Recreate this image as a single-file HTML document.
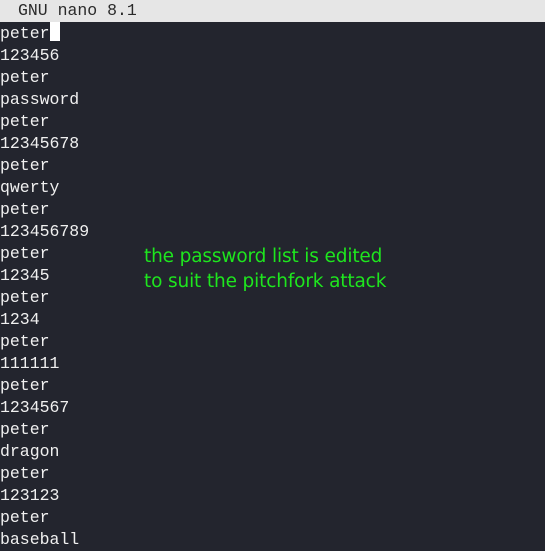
<!DOCTYPE html>
<html><head><meta charset="utf-8"><style>
html,body{margin:0;padding:0;width:545px;height:551px;overflow:hidden;background:#23252e;}
.bar{position:absolute;left:0;top:0;width:545px;height:22px;background:#e6e6e6;}
.bar span{position:absolute;left:18px;top:0;font:16.5px/22px "Liberation Mono",monospace;color:#2a2a2a;}
.txt{position:absolute;left:0;top:22px;font:16.5px/22px "Liberation Mono",monospace;color:#f0f0f0;white-space:pre;}
.cur{display:inline-block;width:10px;height:19px;background:#fff;vertical-align:-3px;}
.note{position:absolute;left:144px;top:244px;font:18.5px/25px "DejaVu Sans","Liberation Sans",sans-serif;color:#1ee61e;letter-spacing:-0.15px;}
</style></head><body>
<div class="bar"><span>GNU nano 8.1</span></div>
<div class="txt">peter<span class="cur"></span>
123456
peter
password
peter
12345678
peter
qwerty
peter
123456789
peter
12345
peter
1234
peter
111111
peter
1234567
peter
dragon
peter
123123
peter
baseball</div>
<div class="note">the password list is edited<br>to suit the pitchfork attack</div>
</body></html>
